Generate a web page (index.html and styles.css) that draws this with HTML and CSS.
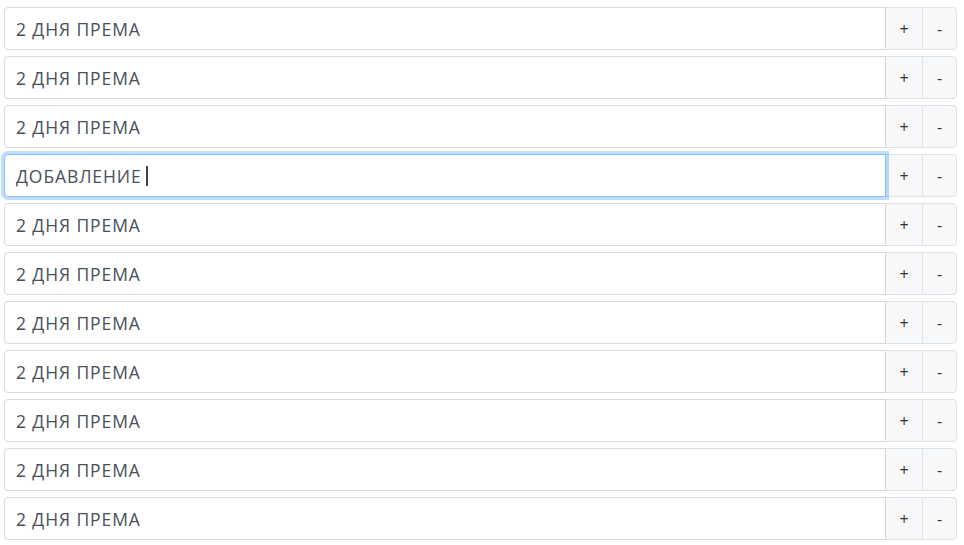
FILE: index.html
```html
<!DOCTYPE html>
<html lang="ru">
<head>
<meta charset="utf-8">
<title>Список</title>
<link rel="stylesheet" href="styles.css">
</head>
<body>
<div class="list">
  <div class="group"><div class="field">2 ДНЯ ПРЕМА</div><button class="btn">+</button><button class="btn last">-</button></div>
  <div class="group"><div class="field">2 ДНЯ ПРЕМА</div><button class="btn">+</button><button class="btn last">-</button></div>
  <div class="group"><div class="field">2 ДНЯ ПРЕМА</div><button class="btn">+</button><button class="btn last">-</button></div>
  <div class="group"><div class="field focus">ДОБАВЛЕНИЕ<span class="caret"></span></div><button class="btn">+</button><button class="btn last">-</button></div>
  <div class="group"><div class="field">2 ДНЯ ПРЕМА</div><button class="btn">+</button><button class="btn last">-</button></div>
  <div class="group"><div class="field">2 ДНЯ ПРЕМА</div><button class="btn">+</button><button class="btn last">-</button></div>
  <div class="group"><div class="field">2 ДНЯ ПРЕМА</div><button class="btn">+</button><button class="btn last">-</button></div>
  <div class="group"><div class="field">2 ДНЯ ПРЕМА</div><button class="btn">+</button><button class="btn last">-</button></div>
  <div class="group"><div class="field">2 ДНЯ ПРЕМА</div><button class="btn">+</button><button class="btn last">-</button></div>
  <div class="group"><div class="field">2 ДНЯ ПРЕМА</div><button class="btn">+</button><button class="btn last">-</button></div>
  <div class="group"><div class="field">2 ДНЯ ПРЕМА</div><button class="btn">+</button><button class="btn last">-</button></div>
</div>
</body>
</html>
```
FILE: styles.css
```css
html, body {
  margin: 0;
  padding: 0;
  background: #ffffff;
}
body {
  font-family: "Open Sans", "Noto Sans", sans-serif;
  color: #495057;
}
.list {
  display: flex;
  flex-direction: column;
  gap: 6px;
  padding: 7px 7px 0 4px;
}
.group {
  display: flex;
  height: 43px;
}
.field {
  flex: 1;
  box-sizing: border-box;
  height: 43px;
  border: 1px solid #d6dadf;
  border-radius: 4px 0 0 4px;
  padding: 0 0 0 11px;
  display: flex;
  align-items: center;
  font-size: 17.5px;
  letter-spacing: 0.9px;
  color: #495057;
  background: #fff;
  position: relative;
  z-index: 1;
}
.field.focus {
  border-color: #86beff;
  box-shadow: 0 0 0 3px rgba(0, 123, 255, 0.25);
  z-index: 2;
}
.caret {
  display: inline-block;
  width: 2px;
  height: 20px;
  background: #444;
  margin-left: 4px;
}
.btn {
  box-sizing: border-box;
  width: 38px;
  height: 43px;
  margin: 0 0 0 -1px;
  padding: 0;
  border: 1px solid #dfe2e6;
  background: #f7f8fa;
  font-family: "Open Sans", "Noto Sans", sans-serif;
  font-size: 16px;
  color: #333;
  border-radius: 0;
}
.btn.last {
  width: 35px;
  border-radius: 0 4px 4px 0;
}
```
